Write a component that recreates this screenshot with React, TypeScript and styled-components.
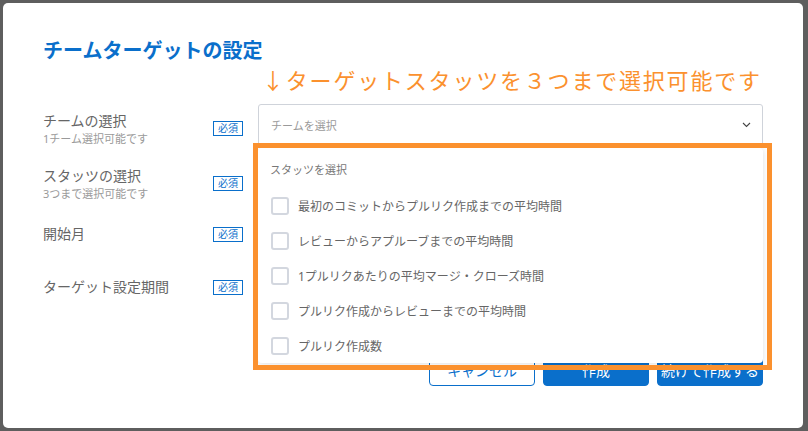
import styled, { createGlobalStyle } from "styled-components";

const GlobalStyle = createGlobalStyle`
  html, body {
    margin: 0;
    padding: 0;
    background: #5e5e5e;
    font-family: "Noto Sans", "Noto Sans CJK JP", sans-serif;
  }
  * {
    box-sizing: border-box;
  }
`;

const BLUE = "#0a6fcb";
const ORANGE = "#fb912e";

const Backdrop = styled.div`
  width: 808px;
  height: 431px;
  padding: 3px;
  overflow: hidden;
`;

const Modal = styled.div`
  width: 800px;
  height: 425px;
  background: #ffffff;
  border-radius: 5px;
  padding: 35px 40px 0 40px;
`;

const Title = styled.h2`
  margin: 0;
  font-size: 20px;
  line-height: 26px;
  font-weight: 700;
  color: ${BLUE};
`;

const Note = styled.p`
  margin: 2px 0 0 219px;
  font-size: 22px;
  line-height: 28px;
  letter-spacing: 1.8px;
  color: ${ORANGE};
  white-space: nowrap;
`;

const Form = styled.div`
  margin-top: 10px;
`;

const Row = styled.div<{ $h: number }>`
  display: grid;
  grid-template-columns: 215px 505px;
  height: ${(p) => p.$h}px;
`;

const LabelCell = styled.div`
  display: flex;
  align-items: center;
  align-self: start;
  padding-top: 7px;
`;

const LabelGroup = styled.div`
  width: 170px;
  display: flex;
  flex-direction: column;
`;

const Label = styled.span`
  font-size: 14px;
  line-height: 20px;
  color: #666;
`;

const Hint = styled.span`
  font-size: 11px;
  line-height: 14px;
  margin-top: 1px;
  color: #9a9a9a;
`;

const Badge = styled.span`
  width: 30px;
  height: 15px;
  border: 1px solid ${BLUE};
  color: ${BLUE};
  font-size: 10px;
  line-height: 13px;
  text-align: center;
`;

const FieldWrap = styled.div`
  position: relative;
  align-self: start;
`;

const Select = styled.div`
  height: 42px;
  border: 1px solid #cfd3da;
  border-radius: 3px;
  display: flex;
  align-items: center;
  justify-content: space-between;
  padding: 0 11px 0 12px;
  font-size: 11px;
  color: #9a9a9a;
`;

const Menu = styled.div`
  position: absolute;
  top: calc(100% + 2px);
  left: 0;
  right: 0;
  height: 215px;
  background: #fff;
  border-radius: 4px;
  box-shadow: 0 1px 6px rgba(0, 0, 0, 0.13);
  padding: 14px 0 0 12px;
  z-index: 5;
`;

const MenuHeader = styled.div`
  font-size: 11px;
  line-height: 16px;
  color: #777;
  margin-bottom: 10px;
`;

const Option = styled.label`
  height: 35px;
  display: flex;
  align-items: center;
  gap: 9px;
  padding-left: 1px;
  font-size: 12px;
  color: #666;
`;

const Box = styled.span`
  width: 18px;
  height: 18px;
  border: 2px solid #d3d7df;
  border-radius: 3px;
  background: #fff;
`;

const Highlight = styled.div`
  position: absolute;
  top: 39px;
  left: -5px;
  right: -9px;
  height: 227px;
  border: 5px solid ${ORANGE};
  z-index: 6;
  pointer-events: none;
`;

const Footer = styled.div`
  display: flex;
  justify-content: flex-end;
  gap: 8px;
`;

const Button = styled.button<{ $primary?: boolean }>`
  width: 106px;
  height: 32px;
  border-radius: 4px;
  border: 1px solid ${BLUE};
  background: ${(p) => (p.$primary ? BLUE : "#fff")};
  color: ${(p) => (p.$primary ? "#fff" : BLUE)};
  font-family: "Noto Sans", "Noto Sans CJK JP", sans-serif;
  font-size: 14px;
  padding: 0;
`;

const Chevron = () => (
  <svg width="9" height="6" viewBox="0 0 9 6">
    <path d="M1 1l3.5 3.5L8 1" fill="none" stroke="#444" strokeWidth="1.1" />
  </svg>
);

const options = [
  "最初のコミットからプルリク作成までの平均時間",
  "レビューからアプルーブまでの平均時間",
  "1プルリクあたりの平均マージ・クローズ時間",
  "プルリク作成からレビューまでの平均時間",
  "プルリク作成数",
];

const App = () => {
  return (
    <Backdrop>
      <GlobalStyle />
      <Modal>
        <Title>チームターゲットの設定</Title>
        <Note>↓ターゲットスタッツを３つまで選択可能です</Note>
        <Form>
          <Row $h={55}>
            <LabelCell>
              <LabelGroup>
                <Label>チームの選択</Label>
                <Hint>1チーム選択可能です</Hint>
              </LabelGroup>
              <Badge>必須</Badge>
            </LabelCell>
            <FieldWrap>
              <Select>
                チームを選択
                <Chevron />
              </Select>
              <Menu>
                <MenuHeader>スタッツを選択</MenuHeader>
                {options.map((o) => (
                  <Option key={o}>
                    <Box />
                    {o}
                  </Option>
                ))}
              </Menu>
              <Highlight />
            </FieldWrap>
          </Row>
          <Row $h={58}>
            <LabelCell>
              <LabelGroup>
                <Label>スタッツの選択</Label>
                <Hint>3つまで選択可能です</Hint>
              </LabelGroup>
              <Badge>必須</Badge>
            </LabelCell>
            <FieldWrap>
              <Select>
                <span />
                <Chevron />
              </Select>
            </FieldWrap>
          </Row>
          <Row $h={53}>
            <LabelCell>
              <LabelGroup>
                <Label>開始月</Label>
              </LabelGroup>
              <Badge>必須</Badge>
            </LabelCell>
            <FieldWrap>
              <Select>
                <span />
                <Chevron />
              </Select>
            </FieldWrap>
          </Row>
          <Row $h={84}>
            <LabelCell>
              <LabelGroup>
                <Label>ターゲット設定期間</Label>
              </LabelGroup>
              <Badge>必須</Badge>
            </LabelCell>
            <FieldWrap>
              <Select>
                <span />
                <Chevron />
              </Select>
            </FieldWrap>
          </Row>
        </Form>
        <Footer>
          <Button>キャンセル</Button>
          <Button $primary>作成</Button>
          <Button $primary>続けて作成する</Button>
        </Footer>
      </Modal>
    </Backdrop>
  );
};

export default App;
